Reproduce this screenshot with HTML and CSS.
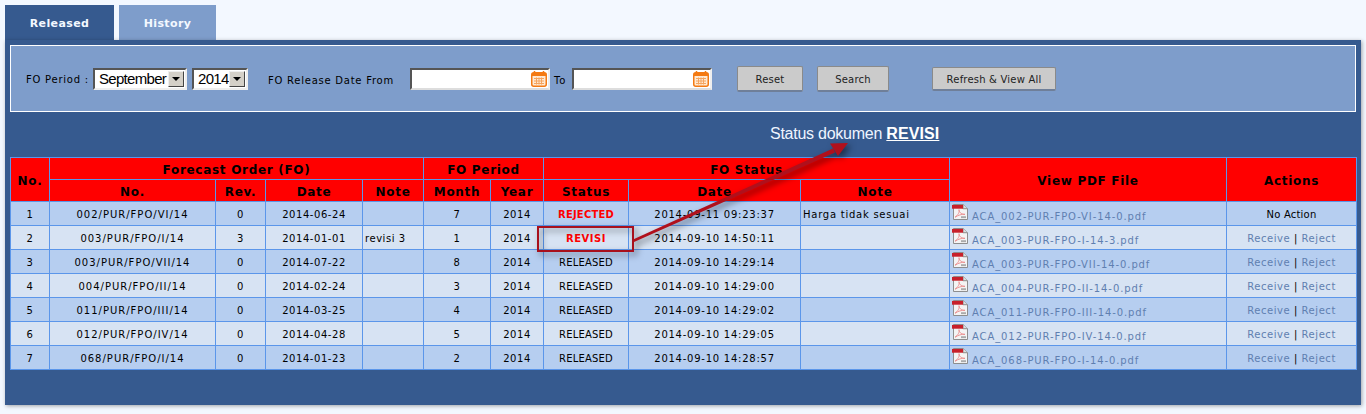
FILE: index.html
```html
<!DOCTYPE html>
<html>
<head>
<meta charset="UTF-8">
<title>Forecast Order</title>
<link rel="stylesheet" href="styles.css">
</head>
<body>
<svg class="defs" width="0" height="0">
    <symbol id="pdf" viewBox="0 0 16 17" preserveAspectRatio="none">
        <path d="M1.5 .5H11L15.5 5V16.5H1.5Z" fill="#f4f4f4" stroke="#8a8a8a"/>
        <path d="M11 .5V5H15.5" fill="#ddd" stroke="#8a8a8a"/>
        <rect x="0" y="1" width="11" height="4" fill="#c8202a"/>
        <path d="M3 14C6 12 8 8 7 6C6.500 8 9 11 13 11C10 10.500 6 12 3 14Z" fill="none" stroke="#e98a8a" stroke-width=".9"/>
        <rect x="9" y="13" width="5" height="2" fill="#aaa"/>
    </symbol>
    <symbol id="cal" viewBox="0 0 16 16">
        <rect x=".75" y="1.750" width="14.500" height="13.500" rx="2" fill="#ffe9d2" stroke="#f47a12" stroke-width="1.500"/>
        <rect x="1" y="2" width="14" height="3" fill="#f47a12"/>
        <path d="M3.500 0V3M12.500 0V3" stroke="#f47a12" stroke-width="1.500"/>
        <path d="M3 7.500H13M3 10H13M3 12.500H13M5.500 6.500V13.500M8 6.500V13.500M10.500 6.500V13.500" stroke="#f5a45e" fill="none"/>
    </symbol>
</svg>

<div class="tabs">
    <a class="tab tab-active">Released</a>
    <a class="tab tab-history">History</a>
</div>

<div class="panel">
    <div class="filter">
        <span class="lbl lbl-period">FO Period :</span>
        <div class="select select-month"><span>September</span><i class="select-btn"></i></div>
        <div class="select select-year"><span>2014</span><i class="select-btn"></i></div>
        <span class="lbl lbl-from">FO Release Date From</span>
        <div class="date"><svg class="cal"><use href="#cal"/></svg></div>
        <span class="lbl lbl-to">To</span>
        <div class="date"><svg class="cal"><use href="#cal"/></svg></div>
        <button class="btn btn-reset">Reset</button>
        <button class="btn btn-search">Search</button>
        <button class="btn btn-refresh">Refresh &amp; View All</button>
    </div>

    <p class="note">Status dokumen <b>REVISI</b></p>

    <table class="grid">
        <colgroup>
            <col class="c1"><col class="c2"><col class="c3"><col class="c4"><col class="c5"><col class="c6"><col class="c7">
            <col class="c8"><col class="c9"><col class="c10"><col class="c11"><col class="c12">
        </colgroup>
        <thead>
            <tr>
                <th rowspan="2">No.</th>
                <th colspan="4">Forecast Order (FO)</th>
                <th colspan="2">FO Period</th>
                <th colspan="3">FO Status</th>
                <th rowspan="2">View PDF File</th>
                <th rowspan="2">Actions</th>
            </tr>
            <tr>
                <th>No.</th><th>Rev.</th><th>Date</th><th>Note</th>
                <th>Month</th><th>Year</th>
                <th>Status</th><th>Date</th><th>Note</th>
            </tr>
        </thead>
        <tbody>
            <tr>
                <td>1</td><td class="code">002/PUR/FPO/VI/14</td><td>0</td><td>2014-06-24</td><td class="left"></td><td>7</td><td>2014</td>
                <td class="flag caps">REJECTED</td><td class="stamp">2014-09-11 09:23:37</td><td class="left stamp">Harga tidak sesuai</td>
                <td class="left pdf-cell"><svg class="pdf"><use href="#pdf"/></svg><a class="file">ACA_002-PUR-FPO-VI-14-0.pdf</a></td>
                <td class="caps">No Action</td>
            </tr>
            <tr>
                <td>2</td><td class="code">003/PUR/FPO/I/14</td><td>3</td><td>2014-01-01</td><td class="left">revisi 3</td><td>1</td><td>2014</td>
                <td class="flag">REVISI</td><td class="stamp">2014-09-10 14:50:11</td><td class="left"></td>
                <td class="left pdf-cell"><svg class="pdf"><use href="#pdf"/></svg><a class="file">ACA_003-PUR-FPO-I-14-3.pdf</a></td>
                <td><a class="act">Receive</a> | <a class="act">Reject</a></td>
            </tr>
            <tr>
                <td>3</td><td class="code">003/PUR/FPO/VII/14</td><td>0</td><td>2014-07-22</td><td class="left"></td><td>8</td><td>2014</td>
                <td class="caps">RELEASED</td><td class="stamp">2014-09-10 14:29:14</td><td class="left"></td>
                <td class="left pdf-cell"><svg class="pdf"><use href="#pdf"/></svg><a class="file">ACA_003-PUR-FPO-VII-14-0.pdf</a></td>
                <td><a class="act">Receive</a> | <a class="act">Reject</a></td>
            </tr>
            <tr>
                <td>4</td><td class="code">004/PUR/FPO/II/14</td><td>0</td><td>2014-02-24</td><td class="left"></td><td>3</td><td>2014</td>
                <td class="caps">RELEASED</td><td class="stamp">2014-09-10 14:29:00</td><td class="left"></td>
                <td class="left pdf-cell"><svg class="pdf"><use href="#pdf"/></svg><a class="file">ACA_004-PUR-FPO-II-14-0.pdf</a></td>
                <td><a class="act">Receive</a> | <a class="act">Reject</a></td>
            </tr>
            <tr>
                <td>5</td><td class="code">011/PUR/FPO/III/14</td><td>0</td><td>2014-03-25</td><td class="left"></td><td>4</td><td>2014</td>
                <td class="caps">RELEASED</td><td class="stamp">2014-09-10 14:29:02</td><td class="left"></td>
                <td class="left pdf-cell"><svg class="pdf"><use href="#pdf"/></svg><a class="file">ACA_011-PUR-FPO-III-14-0.pdf</a></td>
                <td><a class="act">Receive</a> | <a class="act">Reject</a></td>
            </tr>
            <tr>
                <td>6</td><td class="code">012/PUR/FPO/IV/14</td><td>0</td><td>2014-04-28</td><td class="left"></td><td>5</td><td>2014</td>
                <td class="caps">RELEASED</td><td class="stamp">2014-09-10 14:29:05</td><td class="left"></td>
                <td class="left pdf-cell"><svg class="pdf"><use href="#pdf"/></svg><a class="file">ACA_012-PUR-FPO-IV-14-0.pdf</a></td>
                <td><a class="act">Receive</a> | <a class="act">Reject</a></td>
            </tr>
            <tr>
                <td>7</td><td class="code">068/PUR/FPO/I/14</td><td>0</td><td>2014-01-23</td><td class="left"></td><td>2</td><td>2014</td>
                <td class="caps">RELEASED</td><td class="stamp">2014-09-10 14:28:57</td><td class="left"></td>
                <td class="left pdf-cell"><svg class="pdf"><use href="#pdf"/></svg><a class="file">ACA_068-PUR-FPO-I-14-0.pdf</a></td>
                <td><a class="act">Receive</a> | <a class="act">Reject</a></td>
            </tr>
        </tbody>
    </table>

    <!-- red callout drawn over the table, coords are page px minus panel origin -->
    <svg class="callout" width="1356" height="365" viewBox="5 40 1356 365">
        <g class="callout-shape">
            <rect x="538" y="227" width="95" height="24" fill="none" stroke="#a8101c" stroke-width="2"/>
            <path d="M633 239.500L833 148.500L835 152.500L634 242Z" fill="#b0101c"/>
            <path d="M848 143L830 143.500L838 156Z" fill="#b0101c"/>
        </g>
    </svg>
</div>
</body>
</html>
```

FILE: styles.css
```css
html, body {
    margin: 0;
    padding: 0;
}
body {
    height: 414px;
    overflow: hidden;
    background-color: #f3f8ff;
    font-family: "DejaVu Sans", Verdana, sans-serif;
    font-size: 10px;
    color: #000;
}
.defs {
    position: absolute;
}

.tabs {
    display: flex;
    gap: 5px;
    padding: 5px 0 0 5px;
}
.tab {
    height: 35px;
    line-height: 38px;
    text-align: center;
    font-size: 11px;
    font-weight: bold;
    letter-spacing: .4px;
    color: #f3f8ff;
}
.tab-active {
    width: 109px;
    background-color: #365a8f;
}
.tab-history {
    width: 97px;
    background-color: #7e9dcb;
}

.panel {
    position: relative;
    width: 1346px;
    height: 355px;
    margin-left: 5px;
    padding: 5px;
    background-color: #365a8f;
    box-shadow: 1px 1px 4px rgba(0,0,0,0.35);
}

.filter {
    display: flex;
    align-items: center;
    box-sizing: border-box;
    height: 67px;
    padding-left: 15px;
    background-color: #7e9dcb;
    border: 1px solid #fff;
}
.lbl {
    letter-spacing: .75px;
    white-space: nowrap;
}
.lbl-period {
    width: 67px;
    margin-top: 1px;
}
.lbl-from {
    width: 142px;
    margin: 3px 0 0 20px;
}
.lbl-to {
    width: 18px;
    margin: 3px 0 0 4px;
}

.select {
    display: flex;
    align-items: center;
    justify-content: space-between;
    box-sizing: border-box;
    height: 22px;
    padding-right: 1px;
    background-color: #fff;
    border: 2px solid;
    border-color: #555 #eee #eee #555;
    font-family: "Liberation Sans", Arial, sans-serif;
    font-size: 15px;
    letter-spacing: -.7px;
    line-height: 18px;
}
.select span {
    padding-left: 4px;
}
.select-month {
    width: 94px;
    margin-right: 5px;
}
.select-year {
    width: 56px;
}
.select-btn {
    position: relative;
    flex-shrink: 0;
    box-sizing: border-box;
    width: 16px;
    height: 16px;
    background-color: #d4d0c8;
    border: 1px solid;
    border-color: #eee #444 #444 #eee;
}
.select-btn::after {
    content: "";
    position: absolute;
    left: 3px;
    top: 5px;
    border: 4px solid transparent;
    border-top-color: #000;
    border-bottom-width: 0;
}

.date {
    display: flex;
    align-items: center;
    justify-content: flex-end;
    box-sizing: border-box;
    width: 140px;
    height: 22px;
    padding-right: 1px;
    background-color: #fff;
    border: 2px solid;
    border-color: #555 #eee #ddd #555;
}
.cal {
    width: 16px;
    height: 16px;
}

.btn {
    box-sizing: border-box;
    padding: 2px 0 0;
    background-color: #cbcbcb;
    border: 1px solid #8a8a8a;
    border-bottom: 2px solid #6f7f99;
    border-radius: 2px;
    font-family: "DejaVu Sans", Verdana, sans-serif;
    font-size: 10px;
    letter-spacing: .2px;
    color: #222;
}
.btn-reset {
    width: 66px;
    height: 26px;
    margin-left: 25px;
}
.btn-search {
    width: 72px;
    height: 26px;
    margin-left: 14px;
}
.btn-refresh {
    width: 124px;
    height: 24px;
    margin-left: 43px;
}

.note {
    box-sizing: border-box;
    height: 45px;
    margin: 0;
    padding: 12px 0 0 760px;
    font-family: "Liberation Sans", Arial, sans-serif;
    font-size: 16px;
    line-height: 19px;
    letter-spacing: -.25px;
    color: #eef4ff;
}
.note b {
    color: #fff;
    letter-spacing: .1px;
    text-decoration: underline;
}

.grid {
    width: 1346px;
    table-layout: fixed;
    border-collapse: collapse;
    letter-spacing: .55px;
}
.grid th, .grid td {
    padding: 1px 0 0;
    border: 1px solid #5b96ea;
    text-align: center;
    white-space: nowrap;
    overflow: hidden;
}
.grid th {
    height: 19px;
    padding-top: 2px;
    background-color: #ff0000;
    font-size: 12px;
    letter-spacing: .7px;
}
.grid td {
    height: 22px;
    background-color: #b6cef0;
}
.grid tbody tr:nth-child(even) td {
    background-color: #d7e3f3;
}
.grid td.left {
    padding-left: 2px;
    text-align: left;
}
.grid td.pdf-cell {
    height: 21px;
    padding-top: 2px;
    vertical-align: top;
}
.grid td.flag {
    font-weight: bold;
    color: #ff0000;
}
.grid td.code {
    letter-spacing: 1px;
}
.grid td.stamp {
    letter-spacing: .75px;
}
.grid td.caps {
    letter-spacing: .2px;
}
.c1 { width: 39px; }
.c2 { width: 166px; }
.c3 { width: 50px; }
.c4 { width: 97px; }
.c5 { width: 61px; }
.c6 { width: 67px; }
.c7 { width: 53px; }
.c8 { width: 85px; }
.c9 { width: 172px; }
.c10 { width: 149px; }
.c11 { width: 277px; }
.c12 { width: 130px; }

.pdf {
    width: 16px;
    height: 16px;
    margin-right: 4px;
    vertical-align: 0;
}
.file, .act {
    color: #5f7fb0;
}
.file {
    letter-spacing: .9px;
}

.callout {
    position: absolute;
    left: 0;
    top: 0;
    pointer-events: none;
}
.callout-shape {
    filter: drop-shadow(3px 3px 3px rgba(0,0,0,0.5));
}
```
